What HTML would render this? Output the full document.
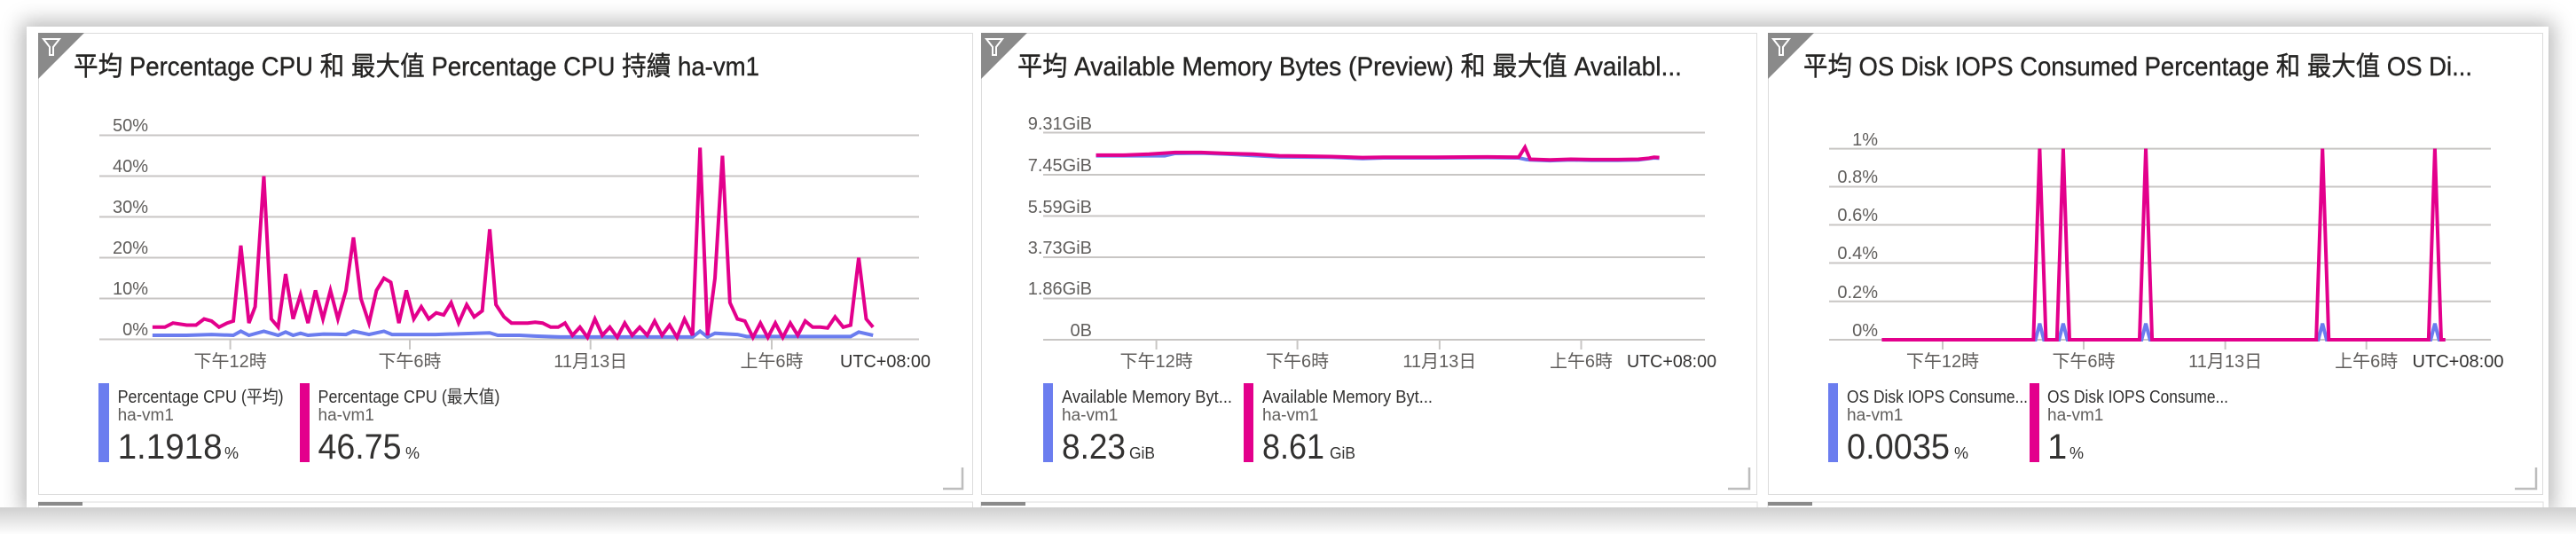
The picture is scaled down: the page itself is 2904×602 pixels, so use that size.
<!DOCTYPE html>
<html><head><meta charset="utf-8"><style>
html,body{margin:0;padding:0;background:#fff;width:2904px;height:602px;overflow:hidden}
#c{position:absolute;left:30px;top:30px;width:2843px;height:542px;background:#fff;box-shadow:0 0 22px 6px rgba(0,0,0,.28)}
svg{position:absolute;left:0;top:0}
text{font-family:"Liberation Sans","Noto Sans CJK TC",sans-serif}
</style></head><body>
<div id="c"></div>
<svg width="2904" height="602" viewBox="0 0 2904 602" xmlns="http://www.w3.org/2000/svg">
<defs>
<g id="funnel"><path d="M5 6 H23 L16 15 V24 H12 V15 Z" fill="none" stroke="#fff" stroke-width="2"/></g>
<linearGradient id="bg" x1="0" y1="0" x2="0" y2="1"><stop offset="0" stop-color="#cfcfcf"/><stop offset="1" stop-color="#fdfdfd"/></linearGradient>
</defs>
<rect x="43.5" y="566" width="1053" height="10" fill="#fff" stroke="#ddd"/>
<rect x="1106" y="566" width="875" height="10" fill="#fff" stroke="#ddd"/>
<rect x="1993" y="566" width="874" height="10" fill="#fff" stroke="#ddd"/>
<rect x="43" y="566" width="50" height="4" fill="#8a8a8a"/>
<rect x="1106" y="566" width="50" height="4" fill="#8a8a8a"/>
<rect x="1993" y="566" width="50" height="4" fill="#8a8a8a"/>
<rect x="0" y="572" width="2904" height="30" fill="url(#bg)"/>

<rect x="43.5" y="37.5" width="1053" height="520" fill="#fff" stroke="#dcdcdc"/>
<rect x="1106.5" y="37.5" width="874" height="520" fill="#fff" stroke="#dcdcdc"/>
<rect x="1993.5" y="37.5" width="873" height="520" fill="#fff" stroke="#dcdcdc"/>

<!-- CARD 1 -->
<path d="M43 37 H95 L43 89 Z" fill="#8a8a8a"/>
<use href="#funnel" x="44" y="38"/>
<text x="83" y="85" font-size="30" fill="#252423" stroke="#252423" stroke-width="0.4" textLength="773" lengthAdjust="spacingAndGlyphs">平均 Percentage CPU 和 最大值 Percentage CPU 持續 ha-vm1</text>
<g stroke="#c8c6c4" stroke-width="2">
<line x1="112" y1="152.5" x2="1036" y2="152.5"/><line x1="112" y1="198.5" x2="1036" y2="198.5"/>
<line x1="112" y1="244.5" x2="1036" y2="244.5"/><line x1="112" y1="290.5" x2="1036" y2="290.5"/>
<line x1="112" y1="336.5" x2="1036" y2="336.5"/><line x1="112" y1="382.5" x2="1036" y2="382.5"/>
<line x1="259.6" y1="383" x2="259.6" y2="394"/><line x1="462" y1="383" x2="462" y2="394"/>
<line x1="665.7" y1="383" x2="665.7" y2="394"/><line x1="870" y1="383" x2="870" y2="394"/>
</g>
<g font-size="20" fill="#605e5c" text-anchor="end">
<text x="167" y="148">50%</text><text x="167" y="194">40%</text><text x="167" y="240">30%</text>
<text x="167" y="286">20%</text><text x="167" y="332">10%</text><text x="167" y="378">0%</text>
</g>
<g font-size="20" fill="#605e5c" text-anchor="middle">
<text x="259.6" y="414">下午12時</text><text x="462" y="414">下午6時</text><text x="665.7" y="414">11月13日</text><text x="870" y="414">上午6時</text>
</g>
<text x="947" y="414" font-size="20" fill="#323130" textLength="102" lengthAdjust="spacingAndGlyphs">UTC+08:00</text>
<g transform="translate(0,382.6) scale(0.7015,-4.6)">
<polyline fill="none" stroke="#6b7def" stroke-width="4" vector-effect="non-scaling-stroke" points="245,1 300,1 340,1.2 375,1 387,2 400,1 424,2 447,1 459,1.8 471,1 483,1.5 495,1 520,1.3 556,1.2 568,2 593,1.2 617,2 630,1.2 700,1.2 787,1.6 800,1 835,1 860,0.8 900,0.6 1113,0.6 1125,2 1137,0.6 1149,1.5 1185,1.2 1200,0.7 1367,0.7 1380,1.8 1403,1"/>
<polyline fill="none" stroke="#e3008c" stroke-width="4" vector-effect="non-scaling-stroke" points="245,3 265,3 278,4 300,3.5 315,3.5 328,5 340,4.5 352,3 365,4 375,4.5 387,23 400,4 410,8 424,40 436,5 447,3 459,16 471,5 483,11 495,4 507,12 519,5 531,12 543,5 556,12 568,25 580,10 593,4 605,12 617,15 628,14 641,4 653,12 665,5 677,8 689,5 701,6.5 713,6 725,9 737,4 750,8.5 762,5.5 775,7 787,27 797,8.5 810,5.5 822,4 835,4 848,4 860,4.2 872,4 885,3 897,3 908,4 920,1 932,3 944,0.5 956,5 968,1 980,3 992,0.5 1004,4 1016,1 1028,3 1040,1 1052,4.5 1064,1 1076,3.5 1088,0.5 1100,5 1113,1 1125,47 1137,1 1149,15 1161,45 1173,9 1185,5 1197,4.5 1210,0.5 1222,4 1234,0.5 1246,4 1258,0.5 1270,4 1282,1 1294,4.5 1306,3 1318,3 1330,2.8 1342,5.5 1355,3 1367,3.5 1380,20 1392,5 1403,3"/>
</g>
<rect x="111" y="432" width="12" height="89" fill="#6b7def"/>
<rect x="338" y="432" width="11" height="89" fill="#e3008c"/>
<g fill="#323130">
<text x="132.6" y="454" font-size="20" textLength="187" lengthAdjust="spacingAndGlyphs">Percentage CPU (平均)</text>
<text x="132.6" y="474" font-size="19" fill="#605e5c">ha-vm1</text>
<text x="132.6" y="517" font-size="40" textLength="118" lengthAdjust="spacingAndGlyphs">1.1918</text>
<text x="253" y="517" font-size="18">%</text>
<text x="358.5" y="454" font-size="20" textLength="205" lengthAdjust="spacingAndGlyphs">Percentage CPU (最大值)</text>
<text x="358.5" y="474" font-size="19" fill="#605e5c">ha-vm1</text>
<text x="358.5" y="517" font-size="40" textLength="94" lengthAdjust="spacingAndGlyphs">46.75</text>
<text x="457" y="517" font-size="18">%</text>
</g>
<path d="M1085 527 V551 H1063" fill="none" stroke="#bdbdbd" stroke-width="2.5"/>

<!-- CARD 2 -->
<path d="M1106 37 H1158 L1106 89 Z" fill="#8a8a8a"/>
<use href="#funnel" x="1107" y="38"/>
<text x="1147" y="85" font-size="30" fill="#252423" stroke="#252423" stroke-width="0.4" textLength="749" lengthAdjust="spacingAndGlyphs">平均 Available Memory Bytes (Preview) 和 最大值 Availabl...</text>
<g stroke="#c8c6c4" stroke-width="2">
<line x1="1176" y1="149.5" x2="1922" y2="149.5"/><line x1="1176" y1="197" x2="1922" y2="197"/>
<line x1="1176" y1="243.5" x2="1922" y2="243.5"/><line x1="1176" y1="290" x2="1922" y2="290"/>
<line x1="1176" y1="336.5" x2="1922" y2="336.5"/><line x1="1176" y1="383" x2="1922" y2="383"/>
<line x1="1303.6" y1="383" x2="1303.6" y2="394"/><line x1="1462.6" y1="383" x2="1462.6" y2="394"/>
<line x1="1622.9" y1="383" x2="1622.9" y2="394"/><line x1="1782.5" y1="383" x2="1782.5" y2="394"/>
</g>
<g font-size="20" fill="#605e5c" text-anchor="end">
<text x="1231" y="146">9.31GiB</text><text x="1231" y="193">7.45GiB</text><text x="1231" y="240">5.59GiB</text>
<text x="1231" y="286">3.73GiB</text><text x="1231" y="332">1.86GiB</text><text x="1231" y="379">0B</text>
</g>
<g font-size="20" fill="#605e5c" text-anchor="middle">
<text x="1303.6" y="414">下午12時</text><text x="1462.6" y="414">下午6時</text><text x="1622.9" y="414">11月13日</text><text x="1782.5" y="414">上午6時</text>
</g>
<text x="1834" y="414" font-size="20" fill="#323130" textLength="101" lengthAdjust="spacingAndGlyphs">UTC+08:00</text>
<g transform="translate(1090,0) scale(0.5869,0.3861)">
<polyline fill="none" stroke="#6b7def" stroke-width="4" vector-effect="non-scaling-stroke" points="248,455 300,455 380,455 400,448 450,447 500,450 600,458 700,459 760,463 800,461 900,461 1000,460 1060,461 1075,466 1082,467 1120,469 1160,467 1200,468 1250,468 1290,467 1320,461 1330,462"/>
<polyline fill="none" stroke="#e3008c" stroke-width="4" vector-effect="non-scaling-stroke" points="248,453 300,453 350,450 400,445 450,445 500,448 550,450 600,455 650,456 700,457 760,460 800,459 900,459 1000,458 1060,459 1072,430 1082,465 1120,467 1160,465 1200,466 1250,466 1290,465 1310,462 1320,459 1330,460"/>
</g>
<rect x="1176" y="432" width="11" height="89" fill="#6b7def"/>
<rect x="1402" y="432" width="11" height="89" fill="#e3008c"/>
<g fill="#323130">
<text x="1197" y="454" font-size="20" textLength="192" lengthAdjust="spacingAndGlyphs">Available Memory Byt...</text>
<text x="1197" y="474" font-size="19" fill="#605e5c">ha-vm1</text>
<text x="1197" y="517" font-size="40" textLength="72" lengthAdjust="spacingAndGlyphs">8.23</text>
<text x="1273" y="517" font-size="18" textLength="29" lengthAdjust="spacingAndGlyphs">GiB</text>
<text x="1423" y="454" font-size="20" textLength="192" lengthAdjust="spacingAndGlyphs">Available Memory Byt...</text>
<text x="1423" y="474" font-size="19" fill="#605e5c">ha-vm1</text>
<text x="1423" y="517" font-size="40" textLength="70" lengthAdjust="spacingAndGlyphs">8.61</text>
<text x="1499" y="517" font-size="18" textLength="29" lengthAdjust="spacingAndGlyphs">GiB</text>
</g>
<path d="M1972 527 V551 H1948" fill="none" stroke="#bdbdbd" stroke-width="2.5"/>

<!-- CARD 3 -->
<path d="M1993 37 H2045 L1993 89 Z" fill="#8a8a8a"/>
<use href="#funnel" x="1994" y="38"/>
<text x="2033" y="85" font-size="30" fill="#252423" stroke="#252423" stroke-width="0.4" textLength="754" lengthAdjust="spacingAndGlyphs">平均 OS Disk IOPS Consumed Percentage 和 最大值 OS Di...</text>
<g stroke="#c8c6c4" stroke-width="2">
<line x1="2062" y1="167.6" x2="2808" y2="167.6"/><line x1="2062" y1="210.5" x2="2808" y2="210.5"/>
<line x1="2062" y1="253.5" x2="2808" y2="253.5"/><line x1="2062" y1="296.5" x2="2808" y2="296.5"/>
<line x1="2062" y1="339.8" x2="2808" y2="339.8"/><line x1="2062" y1="383" x2="2808" y2="383"/>
<line x1="2190" y1="383" x2="2190" y2="394"/><line x1="2349" y1="383" x2="2349" y2="394"/>
<line x1="2508.6" y1="383" x2="2508.6" y2="394"/><line x1="2667.7" y1="383" x2="2667.7" y2="394"/>
</g>
<g font-size="20" fill="#605e5c" text-anchor="end">
<text x="2117" y="164">1%</text><text x="2117" y="206">0.8%</text><text x="2117" y="249">0.6%</text>
<text x="2117" y="292">0.4%</text><text x="2117" y="336">0.2%</text><text x="2117" y="379">0%</text>
</g>
<g font-size="20" fill="#605e5c" text-anchor="middle">
<text x="2190" y="414">下午12時</text><text x="2349" y="414">下午6時</text><text x="2508.6" y="414">11月13日</text><text x="2667.7" y="414">上午6時</text>
</g>
<text x="2719.5" y="414" font-size="20" fill="#323130" textLength="103" lengthAdjust="spacingAndGlyphs">UTC+08:00</text>
<g transform="translate(1980,383) scale(0.5893,-215.4)">
<polyline fill="none" stroke="#6b7def" stroke-width="4" vector-effect="non-scaling-stroke" points="240,0 534,0 542,0.085 550,0 579,0 587,0.085 595,0 737,0 745,0.085 753,0 1075,0 1083,0.085 1091,0 1290,0 1298,0.085 1306,0 1318,0"/>
<polyline fill="none" stroke="#e3008c" stroke-width="4" vector-effect="non-scaling-stroke" points="240,0 530,0 542,1 554,0 575,0 587,1 599,0 733,0 745,1 757,0 1071,0 1083,1 1095,0 1286,0 1298,1 1310,0 1318,0"/>
</g>
<rect x="2061" y="432" width="11" height="89" fill="#6b7def"/>
<rect x="2288" y="432" width="11" height="89" fill="#e3008c"/>
<g fill="#323130">
<text x="2082" y="454" font-size="20" textLength="204" lengthAdjust="spacingAndGlyphs">OS Disk IOPS Consume...</text>
<text x="2082" y="474" font-size="19" fill="#605e5c">ha-vm1</text>
<text x="2082" y="517" font-size="40" textLength="116" lengthAdjust="spacingAndGlyphs">0.0035</text>
<text x="2203" y="517" font-size="18">%</text>
<text x="2308" y="454" font-size="20" textLength="204" lengthAdjust="spacingAndGlyphs">OS Disk IOPS Consume...</text>
<text x="2308" y="474" font-size="19" fill="#605e5c">ha-vm1</text>
<text x="2308" y="517" font-size="40">1</text>
<text x="2333" y="517" font-size="18">%</text>
</g>
<path d="M2859 527 V551 H2835" fill="none" stroke="#bdbdbd" stroke-width="2.5"/>
</svg>
</body></html>
